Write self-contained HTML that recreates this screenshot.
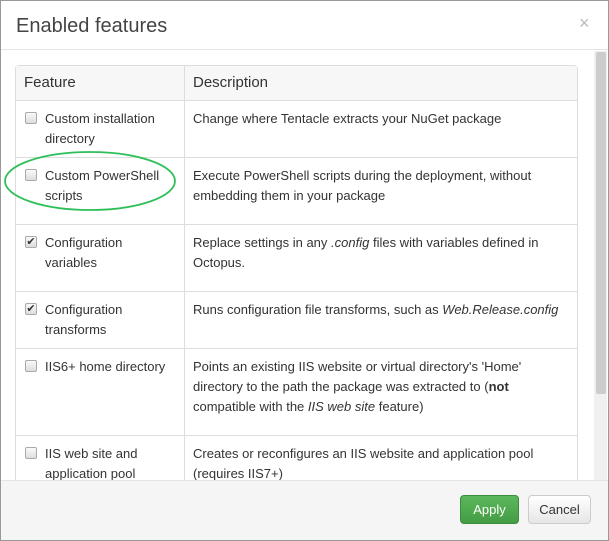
<!DOCTYPE html><html><head><style>
*{box-sizing:border-box}body{margin:0;width:609px;height:541px;overflow:hidden;background:#fff;font-family:"Liberation Sans",sans-serif;color:#333;position:relative}
.frame{position:absolute;inset:0;border:1px solid #999}
.title{position:absolute;left:16px;top:15px;font-size:20px;color:#444}
.x{position:absolute;left:579px;top:13px;font-size:18px;color:#bbb}
.sep{position:absolute;left:1px;right:1px;top:49px;border-top:1px solid #e5e5e5}
.tbl{position:absolute;left:15px;top:65px;width:563px;border:1px solid #ddd;border-radius:4px;border-bottom:none}
.row{display:flex;border-top:1px solid #ddd;font-size:13px;line-height:20px}
.row:first-child{border-top:none;background:#f7f7f7;font-size:15px;height:34px;line-height:34px}
.c1{width:169px;border-right:1px solid #ddd;padding:8px 16px 0 29px;position:relative}
.c2{flex:1;padding:8px 8px 0 8px}
.row:first-child .c1{padding:0 8px}.row:first-child .c2{padding:0 8px}
.cb{position:absolute;left:9px;top:11px;width:12px;height:12px;border:1px solid #aaa;border-radius:2px;background:linear-gradient(#fafafa,#ddd);font-size:11px;line-height:10px;text-align:center;color:#333}
.sb{position:absolute;left:594px;top:51px;width:13px;height:429px;background:#f0f0f0}
.th{position:absolute;left:596px;top:52px;width:10px;height:342px;background:#ccc;border-radius:2px}
.foot{position:absolute;left:1px;right:1px;top:480px;bottom:1px;background:#f5f5f5;border-top:1px solid #e5e5e5}
.btn{position:absolute;top:495px;height:29px;border-radius:4px;font-size:13px;line-height:27px;text-align:center}
</style></head><body>
<div class="frame"></div>
<div class="title">Enabled features</div><div class="x">×</div><div class="sep"></div>
<div class="tbl">
<div class="row"><div class="c1">Feature</div><div class="c2">Description</div></div>
<div class="row" style="height:57px"><div class="c1"><span class="cb"></span>Custom installation directory</div><div class="c2">Change where Tentacle extracts your NuGet package</div></div>
<div class="row" style="height:67px"><div class="c1"><span class="cb"></span>Custom PowerShell scripts</div><div class="c2">Execute PowerShell scripts during the deployment, without embedding them in your package</div></div>
<div class="row" style="height:67px"><div class="c1"><span class="cb">✔</span>Configuration variables</div><div class="c2">Replace settings in any <i>.config</i> files with variables defined in Octopus.</div></div>
<div class="row" style="height:57px"><div class="c1"><span class="cb">✔</span>Configuration transforms</div><div class="c2">Runs configuration file transforms, such as <i>Web.Release.config</i></div></div>
<div class="row" style="height:87px"><div class="c1"><span class="cb"></span>IIS6+ home directory</div><div class="c2">Points an existing IIS website or virtual directory's 'Home' directory to the path the package was extracted to (<b>not</b> compatible with the <i>IIS web site</i> feature)</div></div>
<div class="row" style="height:60px"><div class="c1"><span class="cb"></span>IIS web site and application pool</div><div class="c2">Creates or reconfigures an IIS website and application pool (requires IIS7+)</div></div>
</div>
<svg style="position:absolute;left:0;top:0" width="609" height="541"><ellipse cx="90" cy="181" rx="85" ry="29" fill="none" stroke="#2fbf5a" stroke-width="1.8"/></svg>
<div class="sb"></div><div class="th"></div>
<div class="foot"></div>
<div class="btn" style="left:460px;width:59px;background:linear-gradient(#5cb85c,#449d44);border:1px solid #3d8b3d;color:#fff">Apply</div>
<div class="btn" style="left:528px;width:63px;background:linear-gradient(#fff,#e6e6e6);border:1px solid #ccc;color:#333">Cancel</div>
</body></html>
